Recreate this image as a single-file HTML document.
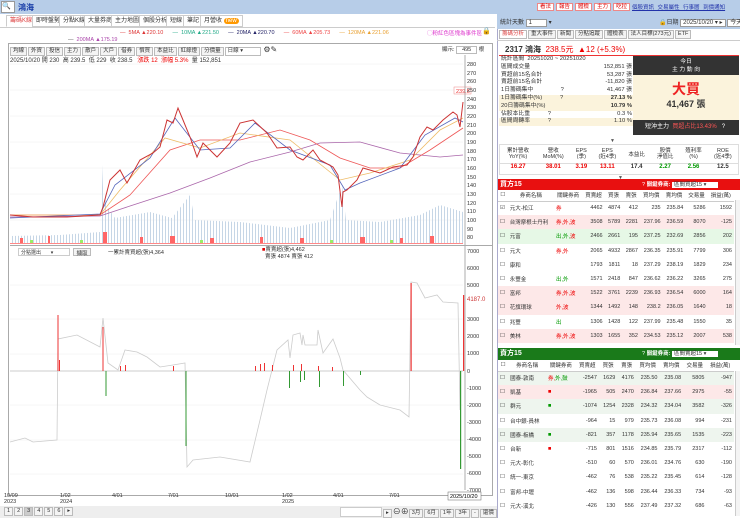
<!DOCTYPE html>
<html><head><meta charset="utf-8">
<style>
*{margin:0;padding:0;box-sizing:border-box}
body{width:740px;height:518px;overflow:hidden;background:#fff;font-family:"Liberation Sans","Noto Sans CJK TC",sans-serif;font-size:6px;color:#333;position:relative}
.a{position:absolute}
.tab{position:absolute;top:15px;height:12px;border:1px solid #ccc;background:#fff;font-size:6px;line-height:10px;padding:0 3px;color:#333}
.btn{display:inline-block;border:1px solid #bbb;background:#f4f4f4;padding:0 2px;height:9px;line-height:7px;font-size:5.5px;margin-right:1px}
table{border-collapse:collapse;width:100%}
td{font-size:5.5px;padding:0 2px;white-space:nowrap}
.r{color:#e00}.g{color:#090}
</style></head><body>
<div class="a" style="left:0;top:0;width:740px;height:14px;background:#b7cde8"></div>
<div class="a" style="left:1px;top:1px;width:14px;height:12px;background:#fff;border:1px solid #999;font-size:7px;line-height:10px">🔍+</div>
<div class="a" style="left:18px;top:2px;font-size:8px;color:#1a3fa8;font-weight:bold">鴻海</div>
<div class="a" style="left:537px;top:2px;font-size:5.5px">
<span style="background:#fff;border:1px solid #e88;color:#d00;padding:0 2px;margin-right:2px">看法</span><span style="background:#fff;border:1px solid #e88;color:#d00;padding:0 2px;margin-right:2px">報告</span><span style="background:#fff;border:1px solid #e88;color:#d00;padding:0 2px;margin-right:2px">體檢</span><span style="background:#fff;border:1px solid #e88;color:#d00;padding:0 2px;margin-right:2px">主力</span><span style="background:#fff;border:1px solid #e88;color:#d00;padding:0 2px">吃拉</span></div>
<div class="a" style="left:632px;top:3px;font-size:5.5px;color:#23a;text-decoration:underline;word-spacing:2px">個股資訊 交易屬性 行事曆 到價通知</div>
<div class="a" style="left:0;top:14px;width:495px;height:14px;background:#fff;border-bottom:1px solid #ccc"></div>
<div class="tab" style="left:6px;color:#d44;border-bottom-color:#fff">籌碼K線</div>
<div class="tab" style="left:32px">即時盤勢</div>
<div class="tab" style="left:59px">分點K線</div>
<div class="tab" style="left:84px">大量券商</div>
<div class="tab" style="left:111px">主力地圖</div>
<div class="tab" style="left:139px">個股分析</div>
<div class="tab" style="left:166px">短線</div>
<div class="tab" style="left:183px">筆記</div>
<div class="tab" style="left:200px">月營收 <span style="background:#f90;color:#fff;border-radius:4px;padding:0 2px">new</span></div>
<div class="a" style="left:120px;top:30px;font-size:5.5px;white-space:nowrap">
<span style="color:#d33">— &nbsp;5MA ▲220.10</span> &nbsp; &nbsp; &nbsp;<span style="color:#2a8">— &nbsp;10MA ▲221.50</span> &nbsp; &nbsp; &nbsp;<span style="color:#226">— &nbsp;20MA ▲220.70</span> &nbsp; &nbsp; &nbsp;<span style="color:#e44">— &nbsp;60MA ▲205.73</span> &nbsp; &nbsp; &nbsp;<span style="color:#e9a030">— &nbsp;120MA ▲221.06</span></div>
<div class="a" style="left:68px;top:37px;font-size:5.5px;color:#a4a"><span style="color:#555">—</span> &nbsp;200MA ▲175.19</div>
<div class="a" style="left:427px;top:29px;font-size:5.5px;color:#d3c">◯粉紅色區塊為事件區</div>
<div class="a" style="left:482px;top:27px;font-size:7px">🔒</div>
<div class="a" style="left:8px;top:43px;width:485px;height:453px;border:1px solid #aaa"></div>
<div class="a" style="left:10px;top:45px;white-space:nowrap"><span class="btn">均線</span><span class="btn">外資</span><span class="btn">投信</span><span class="btn">主力</span><span class="btn">散戶</span><span class="btn">大戶</span><span class="btn">借券</span><span class="btn">慣買</span><span class="btn">本益比</span><span class="btn">紅綠燈</span><span class="btn">分價量</span><span class="btn" style="width:36px;background:#fff">日線 ▾</span> <span style="font-size:8px">⚙✎</span></div>
<div class="a" style="left:442px;top:45px;font-size:5.5px">顯示: <span style="border:1px solid #bbb;padding:0 5px">495</span> 根</div>
<div class="a" style="left:10px;top:55px;font-size:6px;white-space:nowrap">2025/10/20 開 230 &nbsp;高 239.5 &nbsp;低 229 &nbsp;收 238.5 &nbsp; <span class="r">漲跌 12 &nbsp;漲幅 5.3%</span> &nbsp;量 152,851</div>
<svg class="a" style="left:0;top:0" width="497" height="518">
<defs><pattern id="vp" width="3" height="4" patternUnits="userSpaceOnUse"><rect width="1" height="4" fill="#c6d6e6"/></pattern></defs>
<g stroke="#eee" stroke-width="0.5">
<line x1="10" y1="64" x2="463" y2="64"/><line x1="10" y1="90" x2="463" y2="90"/><line x1="10" y1="116" x2="463" y2="116"/><line x1="10" y1="142" x2="463" y2="142"/><line x1="10" y1="168" x2="463" y2="168"/><line x1="10" y1="194" x2="463" y2="194"/><line x1="10" y1="220" x2="463" y2="220"/>
<line x1="10" y1="285" x2="463" y2="285"/><line x1="10" y1="319" x2="463" y2="319"/><line x1="10" y1="354" x2="463" y2="354"/><line x1="10" y1="405" x2="463" y2="405"/><line x1="10" y1="440" x2="463" y2="440"/><line x1="10" y1="474" x2="463" y2="474"/>
</g>
<polygon fill="url(#vp)" points="10,243 10,236 60,235 100,232 103,165 106,205 115,218 150,212 172,218 190,195 195,220 240,222 290,228 330,220 342,185 346,220 380,222 420,215 440,205 463,212 463,243"/>
<g fill="#f66"><rect x="20" y="238" width="3" height="5"/><rect x="48" y="236" width="2" height="7"/><rect x="103" y="232" width="4" height="11"/><rect x="140" y="237" width="3" height="6"/><rect x="170" y="236" width="5" height="7"/><rect x="210" y="238" width="4" height="5"/><rect x="260" y="237" width="3" height="6"/><rect x="300" y="238" width="4" height="5"/><rect x="360" y="237" width="5" height="6"/><rect x="400" y="238" width="3" height="5"/><rect x="430" y="236" width="4" height="7"/></g>
<g fill="#9e6"><rect x="30" y="240" width="3" height="3"/><rect x="80" y="240" width="3" height="3"/><rect x="200" y="240" width="3" height="3"/><rect x="330" y="240" width="3" height="3"/><rect x="390" y="240" width="3" height="3"/></g>
<line x1="10" y1="243.5" x2="463" y2="243.5" stroke="#f88" stroke-width="1"/>
<polyline fill="none" stroke="#a6a" stroke-width="0.8" points="10,217 100,216 130,206 170,193 210,178 250,162 290,152 320,143 360,142 400,153 440,157 463,155"/>
<polyline fill="none" stroke="#e55" stroke-width="0.8" points="10,215 100,215 130,195 170,150 200,140 240,140 280,130 310,140 340,158 370,168 400,168 430,150 463,128"/>
<polyline fill="none" stroke="#eb6" stroke-width="0.8" points="10,215 100,215 120,190 165,138 200,148 240,133 290,140 340,180 370,173 410,160 440,130 463,118"/>
<polyline fill="none" stroke="#56b" stroke-width="0.8" points="10,218 100,214 115,185 150,158 175,118 200,150 230,148 255,123 290,150 330,165 345,190 360,183 400,168 425,135 455,118 463,122"/>
<polyline fill="none" stroke="#c33" stroke-width="1" points="10,215 33,217 67,217 100,215 103,207 110,180 120,170 127,183 140,160 153,153 160,147 167,120 173,123 178,108 183,120 190,137 197,157 203,143 217,157 230,143 240,123 253,120 267,133 277,148 290,147 297,157 303,160 313,150 320,160 333,167 338,175 342,207 343,192 347,190 357,180 363,168 380,173 393,167 407,165 413,157 420,137 427,127 433,130 443,120 453,112 457,115 460,127 463,102"/>
<rect x="454" y="87" width="17" height="7" fill="#fff" stroke="#e88" stroke-width="0.5"/><text x="456" y="93" font-size="5.5" fill="#e33">239.5</text>
<line x1="465" y1="55" x2="465" y2="490" stroke="#999" stroke-width="0.8"/>
<line x1="10" y1="245.5" x2="493" y2="245.5" stroke="#aaa" stroke-width="1"/>
<g font-size="5.5" fill="#333">
<text x="467" y="66">280</text><text x="467" y="75">270</text><text x="467" y="83">260</text><text x="467" y="92">250</text><text x="467" y="101">240</text><text x="467" y="109">230</text><text x="467" y="118">220</text><text x="467" y="127">210</text><text x="467" y="135">200</text><text x="467" y="144">190</text><text x="467" y="153">180</text><text x="467" y="161">170</text><text x="467" y="170">160</text><text x="467" y="179">150</text><text x="467" y="187">140</text><text x="467" y="196">130</text><text x="467" y="205">120</text><text x="467" y="213">110</text><text x="467" y="222">100</text><text x="467" y="231">90</text><text x="467" y="239">80</text>
<text x="467" y="253">7000</text><text x="467" y="270">6000</text><text x="467" y="287">5000</text><text x="467" y="321">3000</text><text x="467" y="338">2000</text><text x="467" y="355">1000</text><text x="467" y="373">0</text><text x="467" y="390">-1000</text><text x="467" y="407">-2000</text><text x="467" y="424">-3000</text><text x="467" y="441">-4000</text><text x="467" y="458">-5000</text><text x="467" y="475">-6000</text><text x="467" y="492">-7000</text>
<text x="467" y="301" fill="#c33" font-size="6">4187.0</text>
<text x="4" y="497">10/09</text><text x="4" y="503">2023</text><text x="60" y="497">1/02</text><text x="60" y="503">2024</text><text x="112" y="497">4/01</text><text x="168" y="497">7/01</text><text x="225" y="497">10/01</text><text x="282" y="497">1/02</text><text x="282" y="503">2025</text><text x="333" y="497">4/01</text><text x="389" y="497">7/01</text>
</g>
<rect x="448" y="492" width="33" height="8" fill="#fff" stroke="#666" stroke-width="0.5"/><text x="450" y="498" font-size="5.5">2025/10/20</text>
<line x1="10" y1="371" x2="463" y2="371" stroke="#999" stroke-width="0.5"/>
<polyline fill="none" stroke="#ccc" stroke-width="0.8" points="10,442 25,438 33,442 57,440 58,339 77,335 100,347 103,318 108,363 118,370 125,350 137,352 147,357 160,367 173,365 185,363 187,467 193,460 220,457 250,462 260,420 267,390 277,350 288,340 290,358 293,335 300,333 302,345 303,335 305,345 317,345 318,330 323,353 333,339 340,358 343,370 360,390 367,397 380,405 400,410 409,417 411,282 417,283 425,298 437,295 443,302 458,303 460,410"/>
<g fill="#e33"><rect x="57.5" y="315" width="1" height="56"/><rect x="59" y="360" width="1" height="11"/><rect x="102.5" y="327" width="1" height="44"/><rect x="120" y="366" width="1" height="5"/><rect x="125" y="365" width="1" height="6"/><rect x="173" y="366" width="1" height="5"/><rect x="255" y="366" width="1" height="5"/><rect x="260" y="364" width="1" height="7"/><rect x="264" y="363" width="1" height="8"/><rect x="272" y="365" width="1" height="6"/><rect x="293" y="365" width="1" height="6"/><rect x="301" y="364" width="1" height="7"/><rect x="318" y="366" width="1" height="5"/><rect x="332" y="367" width="1" height="4"/><rect x="410.5" y="283" width="1.2" height="88"/><rect x="463" y="295" width="1.2" height="76"/></g>
<g fill="#393"><rect x="105.5" y="371" width="1" height="25"/><rect x="185.5" y="371" width="1" height="75"/><rect x="289" y="371" width="1" height="17"/><rect x="300" y="371" width="1" height="11"/><rect x="304" y="371" width="1" height="9"/><rect x="319" y="371" width="1" height="16"/><rect x="343" y="371" width="1" height="15"/><rect x="360" y="371" width="1" height="4"/><rect x="460" y="371" width="1.2" height="98"/></g>
</svg>
<div class="a" style="left:18px;top:248px;width:52px;height:8px;border:1px solid #ccc;font-size:5px;padding-left:2px">分點選出 &nbsp; &nbsp; &nbsp; ▾</div>
<div class="a" style="left:73px;top:248px;width:18px;height:8px;border:1px solid #bbb;background:#f4f4f4;font-size:5.5px;text-align:center">擷取</div>
<div class="a" style="left:108px;top:248px;font-size:5.5px">一累計賣買超(張)4,364</div>
<div class="a" style="left:262px;top:247px;font-size:5.5px;line-height:7px"><span style="color:#d00">■</span>賣賣超(張)4,462<br>&nbsp; 賣張 4874 賣張 412</div>
<div class="a" style="left:0;top:506px;width:497px;height:12px;background:#eee"></div>
<div class="a" style="left:4px;top:507px;font-size:6px"><span class="btn">1</span><span class="btn">2</span><span class="btn" style="background:#ccc">3</span><span class="btn">4</span><span class="btn">5</span><span class="btn">6</span><span class="btn">▸</span></div>
<div class="a" style="left:340px;top:507px;width:42px;height:10px;background:#fff;border:1px solid #ccc"></div>
<div class="a" style="left:383px;top:506px;font-size:6px;white-space:nowrap"><span class="btn">▸</span><span style="font-size:8px">⊖⊕</span><span class="btn">3月</span><span class="btn">6月</span><span class="btn">1年</span><span class="btn">3年</span><span class="btn">-</span><span class="btn">還價</span></div>

<div class="a" style="left:497px;top:14px;width:243px;height:504px;background:#fff;border-left:1px solid #aac"></div>
<div class="a" style="left:497px;top:14px;width:243px;height:15px;background:#b7cde8"></div>
<div class="a" style="left:500px;top:17px;font-size:6px">統計天數 <span style="background:#fff;border:1px solid #999;padding:0 14px 0 2px">1</span> ▾</div>
<div class="a" style="left:659px;top:17px;font-size:6px;white-space:nowrap">🔒日期 <span style="background:#fff;border:1px solid #999;padding:0 2px">2025/10/20 ▾ ▸</span> <span style="background:#fff;border:1px solid #999;padding:0 2px">今天</span></div>
<div class="a" style="left:497px;top:29px;width:243px;height:12px;border-bottom:1px solid #ccc"></div>
<div class="a" style="left:499px;top:30px;font-size:5.5px;white-space:nowrap"><span class="btn" style="color:#d44;background:#fff">籌碼分析</span><span class="btn">重大事件</span><span class="btn">新聞</span><span class="btn">分點追蹤</span><span class="btn">體檢表</span><span class="btn">法人目標(273元)</span><span class="btn">ETF</span></div>
<div class="a" style="left:499px;top:42px;width:240px;height:14px;border-bottom:1.5px solid #e33;font-size:8px;padding:2px 6px;white-space:nowrap"><b>2317 鴻海</b> &nbsp;<span class="r">238.5元 &nbsp;▲12 (+5.3%)</span></div>
<div class="a" style="left:499px;top:56px;width:135px;font-size:5.8px;line-height:7.8px">
<div style="padding-left:2px">統計區間 &nbsp;20251020 ~ 20251020</div>
<div style="padding:0 2px;display:flex;justify-content:space-between"><span>區間成交量</span><span>152,851 張</span></div>
<div style="padding:0 2px;display:flex;justify-content:space-between"><span>買超前15名合計</span><span>53,287 張</span></div>
<div style="padding:0 2px;display:flex;justify-content:space-between"><span>賣超前15名合計</span><span>-11,820 張</span></div>
<div style="padding:0 2px;display:flex;justify-content:space-between"><span>1日籌碼集中 &nbsp; &nbsp; &nbsp; &nbsp; &nbsp; &nbsp; &nbsp; &nbsp; ?</span><span>41,467 張</span></div>
<div style="padding:0 2px;display:flex;justify-content:space-between;background:#fbf3dc"><span>1日籌碼集中(%) &nbsp; &nbsp; &nbsp; &nbsp; &nbsp; ?</span><b>27.13 %</b></div>
<div style="padding:0 2px;display:flex;justify-content:space-between;background:#fbf3dc"><span>20日籌碼集中(%)</span><b>10.79 %</b></div>
<div style="padding:0 2px;display:flex;justify-content:space-between"><span>佔股本比重 &nbsp; &nbsp; &nbsp; &nbsp; &nbsp; ?</span><span>0.3 %</span></div>
<div style="padding:0 2px;display:flex;justify-content:space-between;background:#fbf3dc"><span>區間周轉率 &nbsp; &nbsp; &nbsp; &nbsp; &nbsp; ?</span><span>1.10 %</span></div>
</div>
<div class="a" style="left:633px;top:56px;width:106px;height:19px;background:#333;color:#fff;font-size:5.8px;text-align:center;line-height:8px;padding-top:2px">今日<br>主 力 動 向</div>
<div class="a" style="left:633px;top:75px;width:106px;height:45px;background:#fbf3dc;text-align:center"><div style="color:#e22;font-size:14px;font-weight:bold;margin-top:6px;line-height:16px">大買</div><div style="font-size:9px;font-weight:bold">41,467 張</div></div>
<div class="a" style="left:633px;top:120px;width:106px;height:15px;background:#333;color:#fff;font-size:6px;line-height:15px;padding-left:12px;white-space:nowrap">短沖主力 &nbsp;<span style="color:#f55">買超占比13.43%</span> &nbsp; ?</div>
<div class="a" style="left:610px;top:138px;font-size:5px;color:#555">▼</div>
<div class="a" style="left:499px;top:144px;width:240px;height:31px;border:1px solid #ddd">
<table style="text-align:center"><tr style="height:18px;border-bottom:1px solid #ddd"><td style="line-height:6px">累計營收<br>YoY(%)</td><td style="line-height:6px">營收<br>MoM(%)</td><td style="line-height:6px">EPS<br>(季)</td><td style="line-height:6px">EPS<br>(近4季)</td><td>本益比</td><td style="line-height:6px">股價<br>淨值比</td><td style="line-height:6px">殖利率<br>(%)</td><td style="line-height:6px">ROE<br>(近4季)</td></tr>
<tr style="font-weight:bold"><td class="r" style="font-size:6px">16.27</td><td class="r" style="font-size:6px">38.01</td><td class="r" style="font-size:6px">3.19</td><td class="r" style="font-size:6px">13.11</td><td style="font-size:6px">17.4</td><td class="g" style="font-size:6px">2.27</td><td class="g" style="font-size:6px">2.56</td><td style="font-size:6px">12.5</td></tr></table></div>
<div class="a" style="left:618px;top:175px;font-size:5px;color:#555">▼</div>
<div class="a" style="left:498px;top:179px;width:242px;height:11px;background:#e81010;color:#fff;font-size:7px;line-height:11px;padding-left:2px;font-weight:bold">買方15</div>
<div class="a" style="left:642px;top:180px;font-size:5.5px;color:#fff;white-space:nowrap">? <b>關鍵券商:</b> <span style="background:#fff;color:#333;padding:0 12px 0 2px">區間買超15 ▾</span></div>
<div class="a" style="left:498px;top:190px;width:236px">
<table>
<tr style="height:11px;border-bottom:1px solid #ccc;text-align:center"><td>☐</td><td>券商名稱</td><td>關鍵券商</td><td>買賣超</td><td>買張</td><td>賣張</td><td>買均價</td><td>賣均價</td><td>交易量</td><td>損益(萬)</td></tr>
<tr style="height:14.2px"><td>☑</td><td>元大-松江</td><td class="r">券</td><td align=right>4462</td><td align=right>4874</td><td align=right>412</td><td align=right>235</td><td align=right>235.84</td><td align=right>5286</td><td align=right>1592</td></tr>
<tr style="height:14.2px;background:#fde8e8"><td>☐</td><td>台灣摩根士丹利</td><td class="r">券,外,波</td><td align=right>3508</td><td align=right>5789</td><td align=right>2281</td><td align=right>237.96</td><td align=right>236.59</td><td align=right>8070</td><td align=right>-125</td></tr>
<tr style="height:14.2px;background:#e6f8e6"><td>☐</td><td>元富</td><td class="g">出,外,<span class="r">波</span></td><td align=right>2466</td><td align=right>2661</td><td align=right>195</td><td align=right>237.25</td><td align=right>232.69</td><td align=right>2856</td><td align=right>202</td></tr>
<tr style="height:14.2px"><td>☐</td><td>元大</td><td class="r">券,外</td><td align=right>2065</td><td align=right>4932</td><td align=right>2867</td><td align=right>236.35</td><td align=right>235.91</td><td align=right>7799</td><td align=right>306</td></tr>
<tr style="height:14.2px"><td>☐</td><td>康和</td><td></td><td align=right>1793</td><td align=right>1811</td><td align=right>18</td><td align=right>237.29</td><td align=right>238.19</td><td align=right>1829</td><td align=right>234</td></tr>
<tr style="height:14.2px"><td>☐</td><td>永豐金</td><td class="g">出,外</td><td align=right>1571</td><td align=right>2418</td><td align=right>847</td><td align=right>236.62</td><td align=right>236.22</td><td align=right>3265</td><td align=right>275</td></tr>
<tr style="height:14.2px;background:#fde8e8"><td>☐</td><td>富邦</td><td class="r">券,外,波</td><td align=right>1522</td><td align=right>3761</td><td align=right>2239</td><td align=right>236.93</td><td align=right>236.54</td><td align=right>6000</td><td align=right>164</td></tr>
<tr style="height:14.2px;background:#fde8e8"><td>☐</td><td>花旗環球</td><td class="r">外,波</td><td align=right>1344</td><td align=right>1492</td><td align=right>148</td><td align=right>238.2</td><td align=right>236.05</td><td align=right>1640</td><td align=right>18</td></tr>
<tr style="height:14.2px"><td>☐</td><td>兆豐</td><td class="g">出</td><td align=right>1306</td><td align=right>1428</td><td align=right>122</td><td align=right>237.99</td><td align=right>235.48</td><td align=right>1550</td><td align=right>35</td></tr>
<tr style="height:14.2px;background:#fde8e8"><td>☐</td><td>美林</td><td class="r">券,外,波</td><td align=right>1303</td><td align=right>1655</td><td align=right>352</td><td align=right>234.53</td><td align=right>235.12</td><td align=right>2007</td><td align=right>538</td></tr>
</table></div>
<div class="a" style="left:735px;top:200px;width:5px;height:145px;border-left:1px solid #ccc;background:#f4f4f4"></div>
<div class="a" style="left:498px;top:348px;width:242px;height:12px;background:#1a7a1a;color:#fff;font-size:7px;line-height:12px;padding-left:2px;font-weight:bold">賣方15</div>
<div class="a" style="left:642px;top:349px;font-size:5.5px;color:#fff;white-space:nowrap">? <b>關鍵券商:</b> <span style="background:#fff;color:#333;padding:0 12px 0 2px">區間賣超15 ▾</span></div>
<div class="a" style="left:498px;top:360px;width:236px">
<table>
<tr style="height:11px;border-bottom:1px solid #ccc;text-align:center"><td>☐</td><td>券商名稱</td><td>關鍵券商</td><td>買賣超</td><td>買張</td><td>賣張</td><td>買均價</td><td>賣均價</td><td>交易量</td><td>損益(萬)</td></tr>
<tr style="height:14.2px;background:#eef5ee"><td>☐</td><td>國泰-敦南</td><td class="r">券,<span class="g">外,鼓</span></td><td align=right>-2547</td><td align=right>1629</td><td align=right>4176</td><td align=right>235.50</td><td align=right>235.08</td><td align=right>5805</td><td align=right>-947</td></tr>
<tr style="height:14.2px;background:#fde8e8"><td>☐</td><td>凱基</td><td class="r">■</td><td align=right>-1965</td><td align=right>505</td><td align=right>2470</td><td align=right>236.84</td><td align=right>237.66</td><td align=right>2975</td><td align=right>-55</td></tr>
<tr style="height:14.2px;background:#eef5ee"><td>☐</td><td>群元</td><td class="g">■</td><td align=right>-1074</td><td align=right>1254</td><td align=right>2328</td><td align=right>234.32</td><td align=right>234.04</td><td align=right>3582</td><td align=right>-326</td></tr>
<tr style="height:14.2px"><td>☐</td><td>台中銀-員林</td><td></td><td align=right>-964</td><td align=right>15</td><td align=right>979</td><td align=right>235.73</td><td align=right>236.08</td><td align=right>994</td><td align=right>-231</td></tr>
<tr style="height:14.2px;background:#eef5ee"><td>☐</td><td>國泰-板橋</td><td class="g">■</td><td align=right>-821</td><td align=right>357</td><td align=right>1178</td><td align=right>235.94</td><td align=right>235.65</td><td align=right>1535</td><td align=right>-223</td></tr>
<tr style="height:14.2px"><td>☐</td><td>台新</td><td class="r">■</td><td align=right>-715</td><td align=right>801</td><td align=right>1516</td><td align=right>234.85</td><td align=right>235.79</td><td align=right>2317</td><td align=right>-112</td></tr>
<tr style="height:14.2px"><td>☐</td><td>元大-彰化</td><td></td><td align=right>-510</td><td align=right>60</td><td align=right>570</td><td align=right>236.01</td><td align=right>234.76</td><td align=right>630</td><td align=right>-190</td></tr>
<tr style="height:14.2px"><td>☐</td><td>統一-東京</td><td></td><td align=right>-462</td><td align=right>76</td><td align=right>538</td><td align=right>235.22</td><td align=right>235.45</td><td align=right>614</td><td align=right>-128</td></tr>
<tr style="height:14.2px"><td>☐</td><td>富邦-中壢</td><td></td><td align=right>-462</td><td align=right>136</td><td align=right>598</td><td align=right>236.44</td><td align=right>236.33</td><td align=right>734</td><td align=right>-93</td></tr>
<tr style="height:14.2px"><td>☐</td><td>元大-溪北</td><td></td><td align=right>-426</td><td align=right>130</td><td align=right>556</td><td align=right>237.49</td><td align=right>237.32</td><td align=right>686</td><td align=right>-63</td></tr>
</table></div>
<div class="a" style="left:735px;top:371px;width:5px;height:145px;border-left:1px solid #ccc;background:#f4f4f4"></div>
</body></html>
